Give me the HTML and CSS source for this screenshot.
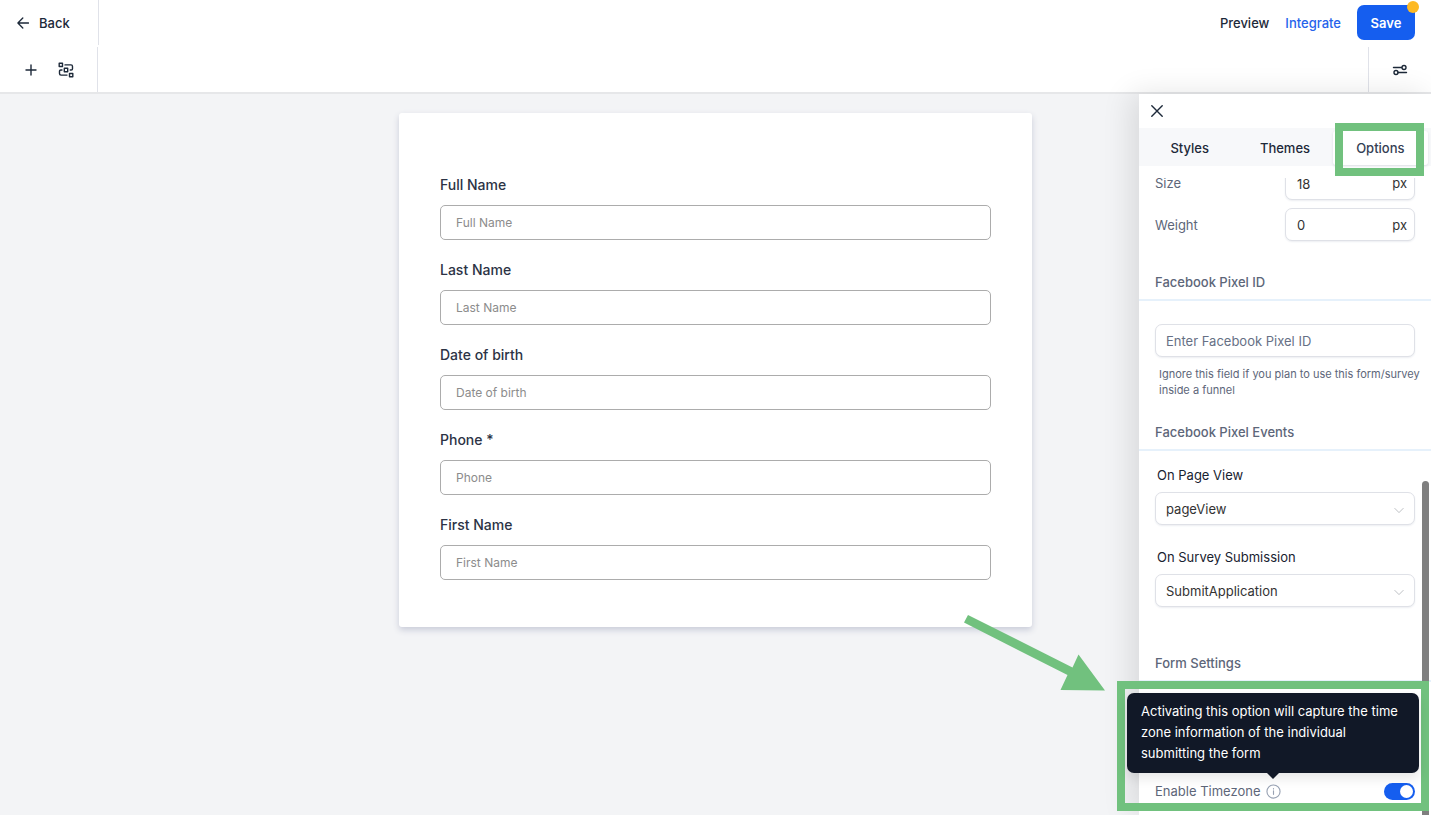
FILE: index.html
```html
<!DOCTYPE html>
<html lang="en">
<head>
<meta charset="utf-8">
<title>Form builder</title>
<link rel="stylesheet" href="styles.css">
</head>
<body>
<div class="app">
  <header class="topbar">
    <button class="back" type="button">
      <svg class="back-icon" viewBox="0 0 12 12"><path d="M11.500 6H1M5.800 1L.9 6l4.900 5"/></svg>
      Back
    </button>
    <nav class="actions">
      <button class="text-action" type="button">Preview</button>
      <a class="text-action link" href="#">Integrate</a>
      <button class="save" type="button">Save<span class="unsaved"></span></button>
    </nav>
  </header>

  <div class="toolbar">
    <div class="tools">
      <button class="icon-button" type="button" aria-label="Add element">
        <svg class="icon" viewBox="0 0 16 16"><path d="M8 3v10M3 8h10"/></svg>
      </button>
      <button class="icon-button" type="button" aria-label="Conditional logic">
        <svg class="icon" viewBox="0 0 16 16"><path d="M1.200 1.200h3.300v3.300H1.200zM6.300 6.300h3.400v3.400H6.300zM11.500 11.500h3.300v3.300h-3.300zM7 2.900h6q1.500 0 1.500 1.500v2.300q0 1.300-1.300 1.300h-1M4 8H2.800q-1.300 0-1.300 1.300v2.300q0 1.500 1.500 1.500h6"/></svg>
      </button>
    </div>
    <div class="settings">
      <button class="icon-button" type="button" aria-label="Form settings">
        <svg class="icon" viewBox="0 0 16 16"><path d="M1.500 5.500h8M6 10.500h8.500"/><circle cx="12" cy="5.500" r="2"/><circle cx="4" cy="10.500" r="2"/></svg>
      </button>
    </div>
  </div>

  <main class="workspace">
    <form class="card">
      <div class="field"><label for="full">Full Name</label><input id="full" type="text" placeholder="Full Name"></div>
      <div class="field"><label for="last">Last Name</label><input id="last" type="text" placeholder="Last Name"></div>
      <div class="field"><label for="dob">Date of birth</label><input id="dob" type="text" placeholder="Date of birth"></div>
      <div class="field"><label for="phone">Phone *</label><input id="phone" type="tel" placeholder="Phone"></div>
      <div class="field"><label for="first">First Name</label><input id="first" type="text" placeholder="First Name"></div>
    </form>

    <aside class="panel">
      <div class="panel-head">
        <button class="close" type="button" aria-label="Close">
          <svg class="close-icon" viewBox="0 0 12 12"><path d="M.8.8l10.400 10.400M11.200.8L.8 11.200"/></svg>
        </button>
      </div>
      <div class="tabs">
        <button class="tab" type="button">Styles</button>
        <button class="tab" type="button">Themes</button>
        <button class="tab selected" type="button">Options<span class="tab-mark"></span></button>
      </div>

      <div class="panel-scroll">
        <div class="rows">
          <div class="row">
            <label for="size">Size</label>
            <span class="unit-box"><input id="size" type="text" value="18"><span>px</span></span>
          </div>
          <div class="row">
            <label for="weight">Weight</label>
            <span class="unit-box"><input id="weight" type="text" value="0"><span>px</span></span>
          </div>
        </div>

        <h2 class="heading"><label for="pixel">Facebook Pixel ID</label></h2>
        <div class="pixel">
          <input class="box" id="pixel" type="text" placeholder="Enter Facebook Pixel ID">
          <p class="hint">Ignore this field if you plan to use this form/survey inside a funnel</p>
        </div>

        <h2 class="heading">Facebook Pixel Events</h2>
        <div class="events">
          <div class="event">
            <label for="view">On Page View</label>
            <div class="select-wrap">
              <select class="box" id="view"><option>pageView</option></select>
              <svg class="chevron" viewBox="0 0 12 8"><path d="M1 1.500l5 5 5-5"/></svg>
            </div>
          </div>
          <div class="event">
            <label for="submit">On Survey Submission</label>
            <div class="select-wrap">
              <select class="box" id="submit"><option>SubmitApplication</option></select>
              <svg class="chevron" viewBox="0 0 12 8"><path d="M1 1.500l5 5 5-5"/></svg>
            </div>
          </div>
        </div>

        <h2 class="heading">Form Settings</h2>
        <div class="timezone">
          <label for="tz">Enable Timezone</label>
          <svg class="info" viewBox="0 0 16 16"><circle cx="8" cy="8" r="7"/><path d="M8 7.300v3.700M8 4.800v.4"/></svg>
          <input class="toggle" id="tz" type="checkbox" role="switch" checked>
        </div>
      </div>
      <div class="scroll-thumb"></div>
      <div class="callout">
        <div class="tooltip" role="tooltip">Activating this option will capture the time zone information of the individual submitting the form</div>
      </div>
      <svg class="arrow" viewBox="0 0 142 78"><path d="M4 0L108.500 52.500L114.500 39.500L141 75.500L96.500 75L103.500 60L0 7.500z"/></svg>
    </aside>
  </main>
</div>
</body>
</html>
```
FILE: styles.css
```css
* { box-sizing: border-box; }

body {
  margin: 0;
  font-family: Inter, "Liberation Sans", sans-serif;
  font-size: 13px;
  line-height: 20px;
  color: #1d2939;
}

button, input, select { font: inherit; color: inherit; }
button { border: 0; padding: 0; background: none; cursor: pointer; }
svg { fill: none; stroke: currentColor; stroke-linecap: round; stroke-linejoin: round; }

.app { display: flex; flex-direction: column; height: 100vh; overflow: hidden; background: #fff; }

.topbar { display: flex; justify-content: space-between; height: 45px; }
.back {
  display: flex;
  align-items: center;
  gap: 10px;
  width: 99px;
  padding-left: 17px;
  border-right: 1px solid #e0e2e9;
  font-weight: 500;
}
.back-icon { width: 12px; height: 12px; stroke-width: 1.3; }
.actions { display: flex; align-items: center; gap: 16px; padding-right: 16px; }
.text-action { font-weight: 500; text-decoration: none; color: #1d2939; }
.link { color: #2563eb; }
.save {
  position: relative;
  width: 58px;
  height: 35px;
  border-radius: 7px;
  background: #155eef;
  color: #fff;
  font-weight: 600;
}
.unsaved {
  position: absolute;
  top: -4px;
  right: -4px;
  width: 12px;
  height: 12px;
  border-radius: 50%;
  background: #fdb924;
}

.toolbar {
  display: flex;
  justify-content: space-between;
  height: 49px;
  padding-top: 2px;
  border-bottom: 2px solid #e6e7e9;
}
.tools, .settings { display: flex; align-items: center; }
.tools { gap: 19px; width: 98px; padding-left: 23px; border-right: 1px solid #e0e2e9; }
.settings { width: 63px; justify-content: center; border-left: 1px solid #e0e2e9; }
.icon-button { display: flex; }
.icon { width: 16px; height: 16px; stroke-width: 1.4; }

.workspace { position: relative; flex: 1; padding: 19px 16px; background: #f3f4f6; }

.card {
  max-width: 633px;
  margin: 0 auto;
  padding: 62px 41px 47px;
  border-radius: 3px;
  background: #fff;
  box-shadow: 0 3px 6px #c9ccd9;
}
.field { display: flex; flex-direction: column; gap: 10px; }
.field + .field { margin-top: 20px; }
.field label { font-size: 14px; font-weight: 500; color: #2c3345; }
.field input {
  height: 35px;
  padding: 0 15px;
  border: 1px solid #acacac;
  border-radius: 5px;
  font-size: 12px;
}
.field input::placeholder { color: #8c8c8c; opacity: 1; }

.panel {
  position: absolute;
  top: 0;
  right: 0;
  bottom: 0;
  display: flex;
  flex-direction: column;
  width: 292px;
  background: #fff;
  box-shadow: -8px 0 28px rgba(0, 0, 0, .11);
}
.panel-head { display: flex; align-items: center; height: 34px; padding-left: 12px; }
.close { display: flex; }
.close-icon { width: 12px; height: 12px; stroke-width: 1.4; }
.tabs { display: flex; height: 38px; padding: 3px 3px 1px; background: #f7f8fa; }
.tab { position: relative; flex: 1; border-radius: 3px; font-weight: 500; }
.tab.selected { background: #fff; color: #344054; box-shadow: 0 1px 3px #dcdee4; }
.tab-mark { position: absolute; inset: -8px 4px -11px 2px; border: 8px solid #71c17e; }

.panel-scroll { flex: 1; margin-top: 12px; overflow: hidden; color: #5d6679; }
.rows { display: flex; flex-direction: column; gap: 8px; margin-top: -11px; padding: 0 16px; }
.row { display: flex; align-items: center; justify-content: space-between; }
.row:first-child { line-height: 11px; }
.unit-box, .box {
  height: 33px;
  border: 1px solid #dfe1e7;
  border-radius: 7px;
  background: #fff;
  box-shadow: 0 1px 2px #eceef2;
}
.unit-box { display: flex; align-items: center; width: 130px; padding: 0 7px 0 11px; color: #333; }
.unit-box input { flex: 1; min-width: 0; padding: 0; border: 0; background: none; }

.heading {
  margin: 31px 0 0;
  padding: 0 16px 7px;
  border-bottom: 2px solid #e6f1fb;
  font-size: 13px;
  font-weight: 500;
  line-height: 20px;
}
.pixel { padding: 23px 16px 0; }
.box { display: block; width: 100%; padding: 0 10px; }
.box::placeholder { color: #667085; opacity: 1; }
.hint { margin: 9px -5px 0 4px; font-size: 11px; line-height: 16px; }
.pixel + .heading { margin-top: 24px; }

.events { display: flex; flex-direction: column; gap: 22px; padding: 14px 16px 15px; }
.event label { display: block; margin: 0 2px 7px; color: #182230; }
.select-wrap { position: relative; }
select.box { appearance: none; color: #333; }
.chevron { position: absolute; top: 15px; right: 11px; width: 10px; height: 7px; color: #b0b3b8; pointer-events: none; }

.timezone { display: flex; align-items: center; gap: 5px; padding: 99px 16px 0; }
.info { width: 15px; height: 15px; color: #98a2b3; stroke-width: 1.2; }
.toggle {
  appearance: none;
  display: flex;
  align-items: center;
  justify-content: flex-end;
  width: 31px;
  height: 17px;
  margin: 0 0 0 auto;
  padding: 2px;
  border-radius: 9px;
  background: #155eef;
}
.toggle::before { content: ""; width: 13px; height: 13px; border-radius: 50%; background: #fff; }

.scroll-thumb {
  position: absolute;
  top: 387px;
  right: 2px;
  bottom: 0;
  width: 7px;
  border-radius: 4px 4px 0 0;
  background: #7f7f7f;
}
.callout {
  position: absolute;
  top: 587px;
  right: 2px;
  width: 312px;
  height: 130px;
  padding: 4px 2px;
  border: 8px solid #71c17e;
}
.tooltip {
  position: relative;
  padding: 8px 14px 9px;
  border-radius: 7px;
  background: #111827;
  box-shadow: 0 5px 12px rgba(0, 0, 0, .1);
  color: #fff;
  line-height: 21px;
}
.tooltip::after {
  content: "";
  position: absolute;
  top: 100%;
  left: 140px;
  border: 6px solid transparent;
  border-top-color: #111827;
  border-bottom: 0;
}
.arrow { position: absolute; top: 521px; right: 325px; width: 142px; height: 78px; fill: #71c17e; stroke: none; }
```
